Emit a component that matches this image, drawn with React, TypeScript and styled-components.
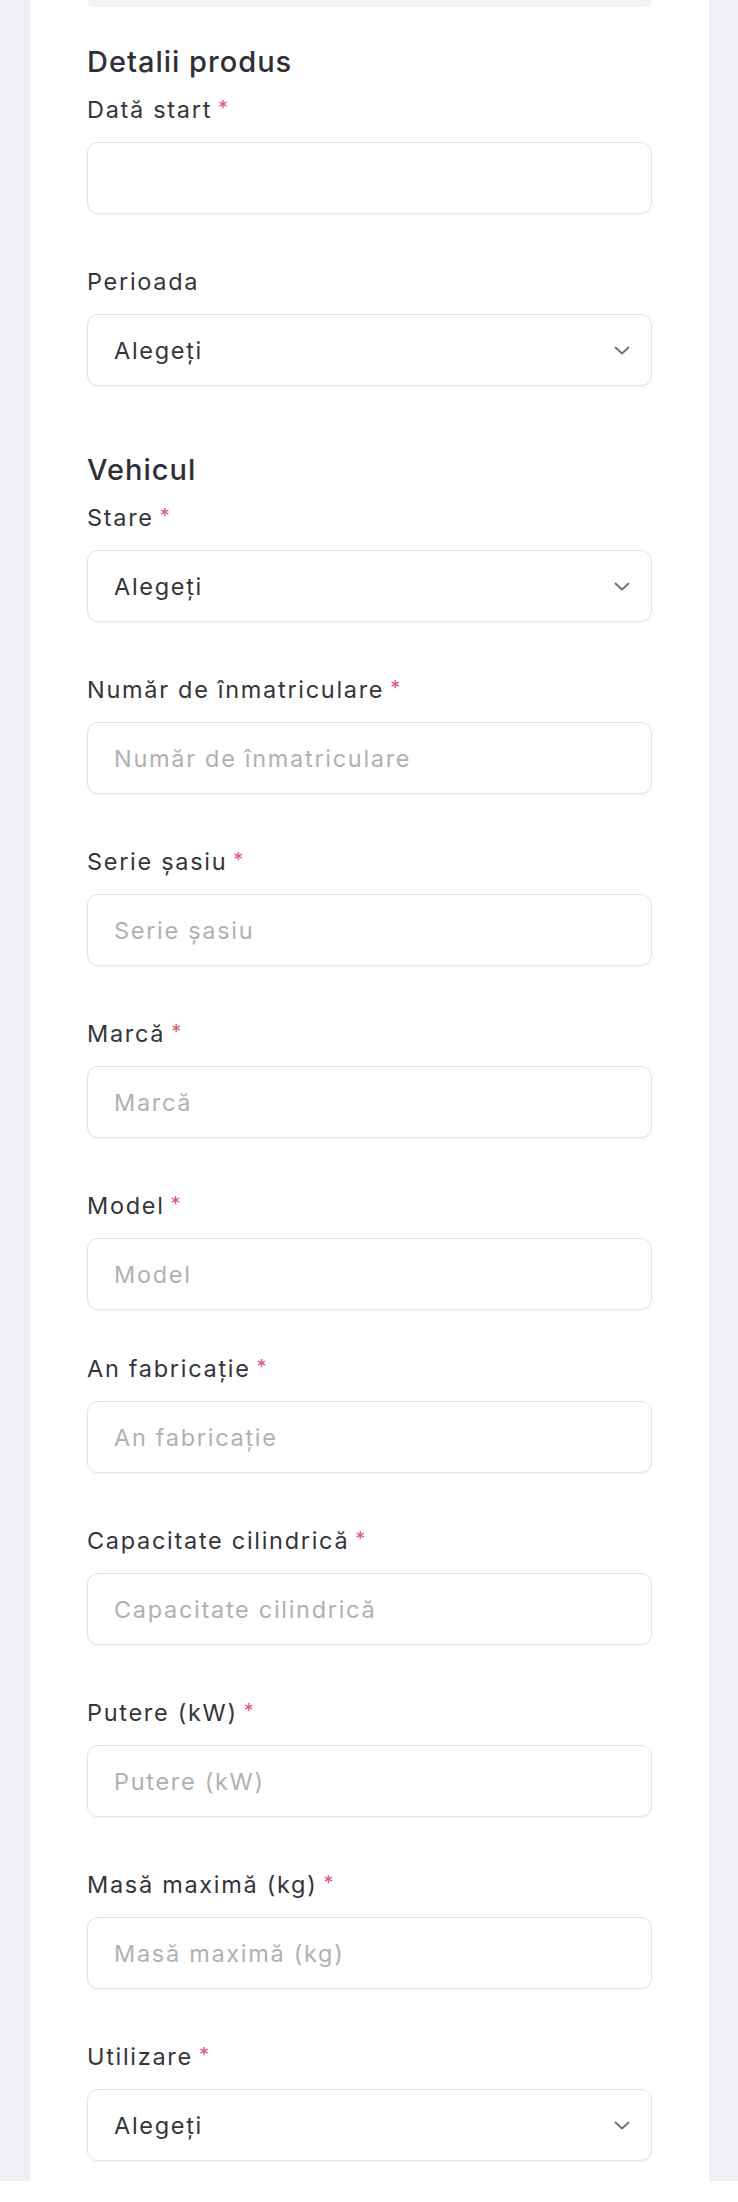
import styled, { createGlobalStyle } from "styled-components";

const GlobalStyle = createGlobalStyle`
  * { box-sizing: border-box; }
  body {
    margin: 0;
    background: #ffffff;
    font-family: Inter, "Liberation Sans", sans-serif;
    color: #34343c;
  }
`;

const Page = styled.div`
  background: #efeff5;
  padding: 0 29px 0 30px;
`;

const Card = styled.div`
  background: #ffffff;
  padding: 0 57px 20px;
  display: flex;
  flex-direction: column;
`;

const PrevEdge = styled.div`
  height: 7px;
  background: #f3f3f6;
  border-radius: 0 0 6px 6px;
`;

const Sections = styled.div`
  display: flex;
  flex-direction: column;
  gap: 66px;
  margin-top: 37px;
`;

const Section = styled.section`
  display: flex;
  flex-direction: column;
`;

const Heading = styled.h2`
  margin: 0 0 14px;
  font-size: 29px;
  line-height: 36px;
  font-weight: 500;
  letter-spacing: 1px;
  color: #2f2f37;
`;

const Fields = styled.div`
  display: flex;
  flex-direction: column;
  gap: 52px;
`;

const Field = styled.div<{ $pullUp?: number }>`
  display: flex;
  flex-direction: column;
  gap: 16px;
  margin-top: ${({ $pullUp }) => ($pullUp ? `-${$pullUp}px` : "0")};
`;

const Label = styled.label`
  display: block;
  height: 32px;
  font-size: 23.5px;
  line-height: 32px;
  letter-spacing: 1.7px;
  color: #34343c;
  white-space: nowrap;
`;

const Required = styled.span`
  color: #dd5683;
  margin-left: 6px;
  font-size: 20px;
  line-height: 0;
  vertical-align: 3px;
`;

const Box = styled.div<{ $empty?: boolean }>`
  height: 72px;
  border: 1.5px solid #e3e3e6;
  border-radius: 11px;
  box-shadow: 0 1px 2px rgba(0, 0, 0, 0.05);
  background: #ffffff;
  display: flex;
  align-items: center;
  justify-content: space-between;
  padding: 0 21px 0 26px;
  font-size: 23.5px;
  letter-spacing: 1.7px;
  color: ${({ $empty }) => ($empty ? "#b0b0b4" : "#34343c")};
`;

const Chevron = () => (
  <svg width="16" height="9" viewBox="0 0 16 9" fill="none">
    <polyline
      points="1.5,1.5 8,7.5 14.5,1.5"
      stroke="#6f6f74"
      strokeWidth="1.8"
      strokeLinecap="round"
      strokeLinejoin="round"
    />
  </svg>
);

type FieldDef = {
  label: string;
  required?: boolean;
  kind: "input" | "select" | "date";
  pullUp?: number;
};

const productFields: FieldDef[] = [
  { label: "Dată start", required: true, kind: "date" },
  { label: "Perioada", kind: "select" },
];

const vehicleFields: FieldDef[] = [
  { label: "Stare", required: true, kind: "select" },
  { label: "Număr de înmatriculare", required: true, kind: "input" },
  { label: "Serie șasiu", required: true, kind: "input" },
  { label: "Marcă", required: true, kind: "input" },
  { label: "Model", required: true, kind: "input" },
  { label: "An fabricație", required: true, kind: "input", pullUp: 9 },
  { label: "Capacitate cilindrică", required: true, kind: "input" },
  { label: "Putere (kW)", required: true, kind: "input" },
  { label: "Masă maximă (kg)", required: true, kind: "input" },
  { label: "Utilizare", required: true, kind: "select" },
];

const FormField = ({ field }: { field: FieldDef }) => (
  <Field $pullUp={field.pullUp}>
    <Label>
      {field.label}
      {field.required && <Required>*</Required>}
    </Label>
    {field.kind === "select" && (
      <Box>
        <span>Alegeți</span>
        <Chevron />
      </Box>
    )}
    {field.kind === "input" && <Box $empty>{field.label}</Box>}
    {field.kind === "date" && <Box />}
  </Field>
);

const BottomSpace = styled.div`
  height: 20px;
  background: #ffffff;
`;

export default function App() {
  return (
    <>
      <GlobalStyle />
      <Page>
        <Card>
          <PrevEdge />
          <Sections>
            <Section>
              <Heading>Detalii produs</Heading>
              <Fields>
                {productFields.map((f) => (
                  <FormField key={f.label} field={f} />
                ))}
              </Fields>
            </Section>
            <Section>
              <Heading>Vehicul</Heading>
              <Fields>
                {vehicleFields.map((f) => (
                  <FormField key={f.label} field={f} />
                ))}
              </Fields>
            </Section>
          </Sections>
        </Card>
      </Page>
      <BottomSpace />
    </>
  );
}
